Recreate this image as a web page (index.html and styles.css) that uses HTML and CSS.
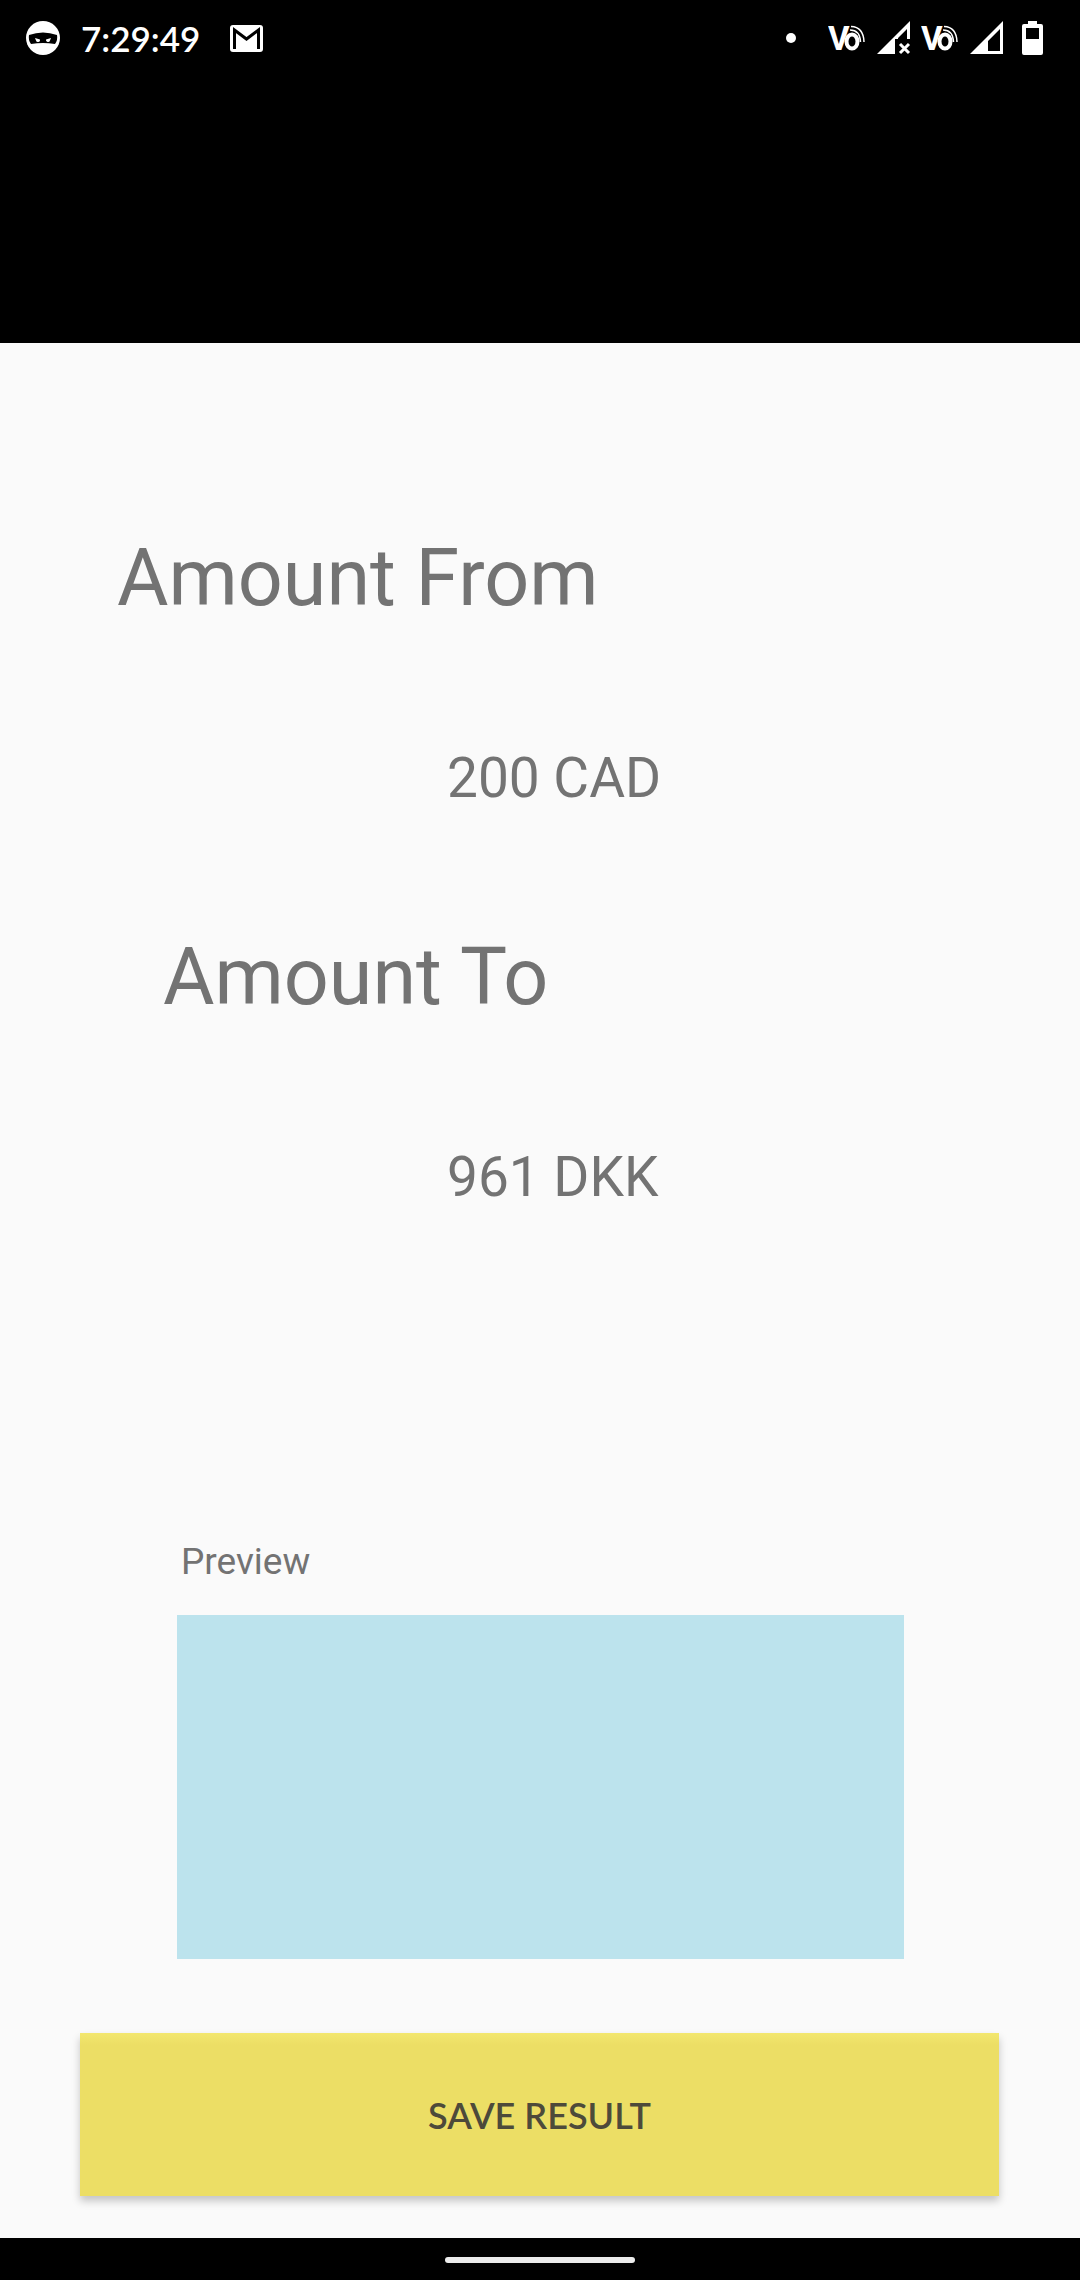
FILE: index.html
```html
<!DOCTYPE html>
<html lang="en">
<head>
<meta charset="utf-8">
<meta name="viewport" content="width=device-width, initial-scale=1">
<title>Conversion result</title>
<link rel="stylesheet" href="styles.css">
</head>
<body>
<header class="top">
  <div class="status">
    <svg class="ninja" width="34" height="34" viewBox="0 0 34 34" aria-hidden="true">
      <circle cx="17" cy="17" r="17" fill="#fff"/>
      <path d="M3 14Q17 9 31 14Q32 19 29 23Q17 21 5 23Q2 19 3 14Z" fill="#000"/>
      <path d="M9 17l5 1.500a2 2 0 0 1-4 1zM25 17l-5 1.500a2 2 0 0 0 4 1z" fill="#fff"/>
    </svg>
    <time class="clock">7:29:49</time>
    <svg class="mail" width="33" height="27" viewBox="0 0 33 27" aria-hidden="true">
      <rect width="33" height="27" rx="3" fill="#fff"/>
      <path d="M4.500 24V5L16.500 14L28.500 5V24" fill="none" stroke="#000" stroke-width="3"/>
    </svg>
    <span class="dot"></span>
    <svg class="volte" width="38" height="48" viewBox="0 -10 38 48" aria-hidden="true">
      <text x="0" y="26" class="volte-v">V</text>
      <ellipse cx="24" cy="17.500" rx="5.500" ry="7" fill="none" stroke="#fff" stroke-width="4"/>
      <path d="M22 6Q32 6 32.500 18M23 2.500Q35.500 3 36 18" fill="none" stroke="#fff" stroke-width="1.500"/>
    </svg>
    <svg class="signal" width="34" height="34" viewBox="0 0 34 34" aria-hidden="true">
      <path d="M0 33L33 0V18H30V8L21 17V18H18V33Z" fill="#fff"/>
      <path d="M23 23L32 32M32 23L23 32" stroke="#fff" stroke-width="3"/>
    </svg>
    <svg class="volte" width="38" height="48" viewBox="0 -10 38 48" aria-hidden="true">
      <text x="0" y="26" class="volte-v">V</text>
      <ellipse cx="24" cy="17.500" rx="5.500" ry="7" fill="none" stroke="#fff" stroke-width="4"/>
      <path d="M22 6Q32 6 32.500 18M23 2.500Q35.500 3 36 18" fill="none" stroke="#fff" stroke-width="1.500"/>
    </svg>
    <svg class="signal" width="34" height="34" viewBox="0 0 34 34" aria-hidden="true">
      <path fill-rule="evenodd" d="M0 33L33 0V33ZM30 8L18 20V30H30Z" fill="#fff"/>
    </svg>
    <svg class="battery" width="21" height="34" viewBox="0 0 21 34" aria-hidden="true">
      <path fill-rule="evenodd" d="M6 0h9v3h4q2 0 2 2v27q0 2-2 2H2q-2 0-2-2V5q0-2 2-2h4zM4 7v11h13V7z" fill="#fff"/>
    </svg>
  </div>
</header>
<main class="result">
  <h1 class="title title-from">Amount From</h1>
  <p class="amount">200 CAD</p>
  <h1 class="title title-to">Amount To</h1>
  <p class="amount">961 DKK</p>
  <section class="preview">
    <h2 class="caption">Preview</h2>
    <div class="canvas"></div>
  </section>
  <button class="save" type="button">SAVE RESULT</button>
</main>
<footer class="nav"><span class="pill"></span></footer>
</body>
</html>
```

FILE: styles.css
```css
* {
  box-sizing: border-box;
}

body {
  margin: 0;
  min-height: 100vh;
  display: flex;
  flex-direction: column;
  background: #fafafa;
  color: #737373;
  font-family: Roboto, sans-serif;
}

.top {
  padding-bottom: 267px;
  background: #000;
  color: #fff;
}

.status {
  display: flex;
  align-items: center;
  height: 76px;
  padding: 0 37px 0 26px;
}

.clock {
  margin-left: 21px;
  font: 600 35px/40px "Lato Semibold", "Lato Medium", Lato, sans-serif;
}

.mail {
  margin-left: 30px;
}

.dot {
  width: 10px;
  height: 10px;
  margin-left: auto;
  border-radius: 50%;
  background: #fff;
}

.volte {
  margin-left: 32px;
}

.volte-v {
  font: 700 33px "Liberation Sans Narrow", Roboto, sans-serif;
  fill: #fff;
}

.signal {
  margin-left: 11px;
}

.signal + .volte {
  margin-left: 10px;
}

.battery {
  margin-left: 18px;
}

.result {
  flex: 1;
  display: flex;
  flex-direction: column;
  padding: 183px 81px 42px 80px;
}

.title {
  margin: 0;
  font-size: 79px;
  line-height: 104px;
  font-weight: 400;
}

.title-from {
  padding-left: 37px;
}

.title-to {
  padding-left: 83px;
}

.amount {
  margin: 111px 0 110px;
  padding-left: 367px;
  font-size: 55px;
  line-height: 74px;
}

.preview {
  margin: auto 95px 74px 97px;
}

.caption {
  margin: 0 0 29px;
  padding-left: 4px;
  font-size: 37px;
  line-height: 48px;
  font-weight: 400;
}

.canvas {
  height: 344px;
  background: #bce3ed;
}

.save {
  height: 163px;
  border: 0;
  background: linear-gradient(#f3e76e, #ecde65 12px);
  box-shadow: 0 5px 8px rgba(0, 0, 0, 0.22);
  color: #4d4a3a;
  font: 600 36px/48px "Lato Semibold", "Lato Medium", Lato, sans-serif;
}

.nav {
  display: flex;
  justify-content: center;
  height: 42px;
  padding-top: 19px;
  background: #000;
}

.pill {
  width: 190px;
  height: 6px;
  border-radius: 3px;
  background: #ececec;
}
```
